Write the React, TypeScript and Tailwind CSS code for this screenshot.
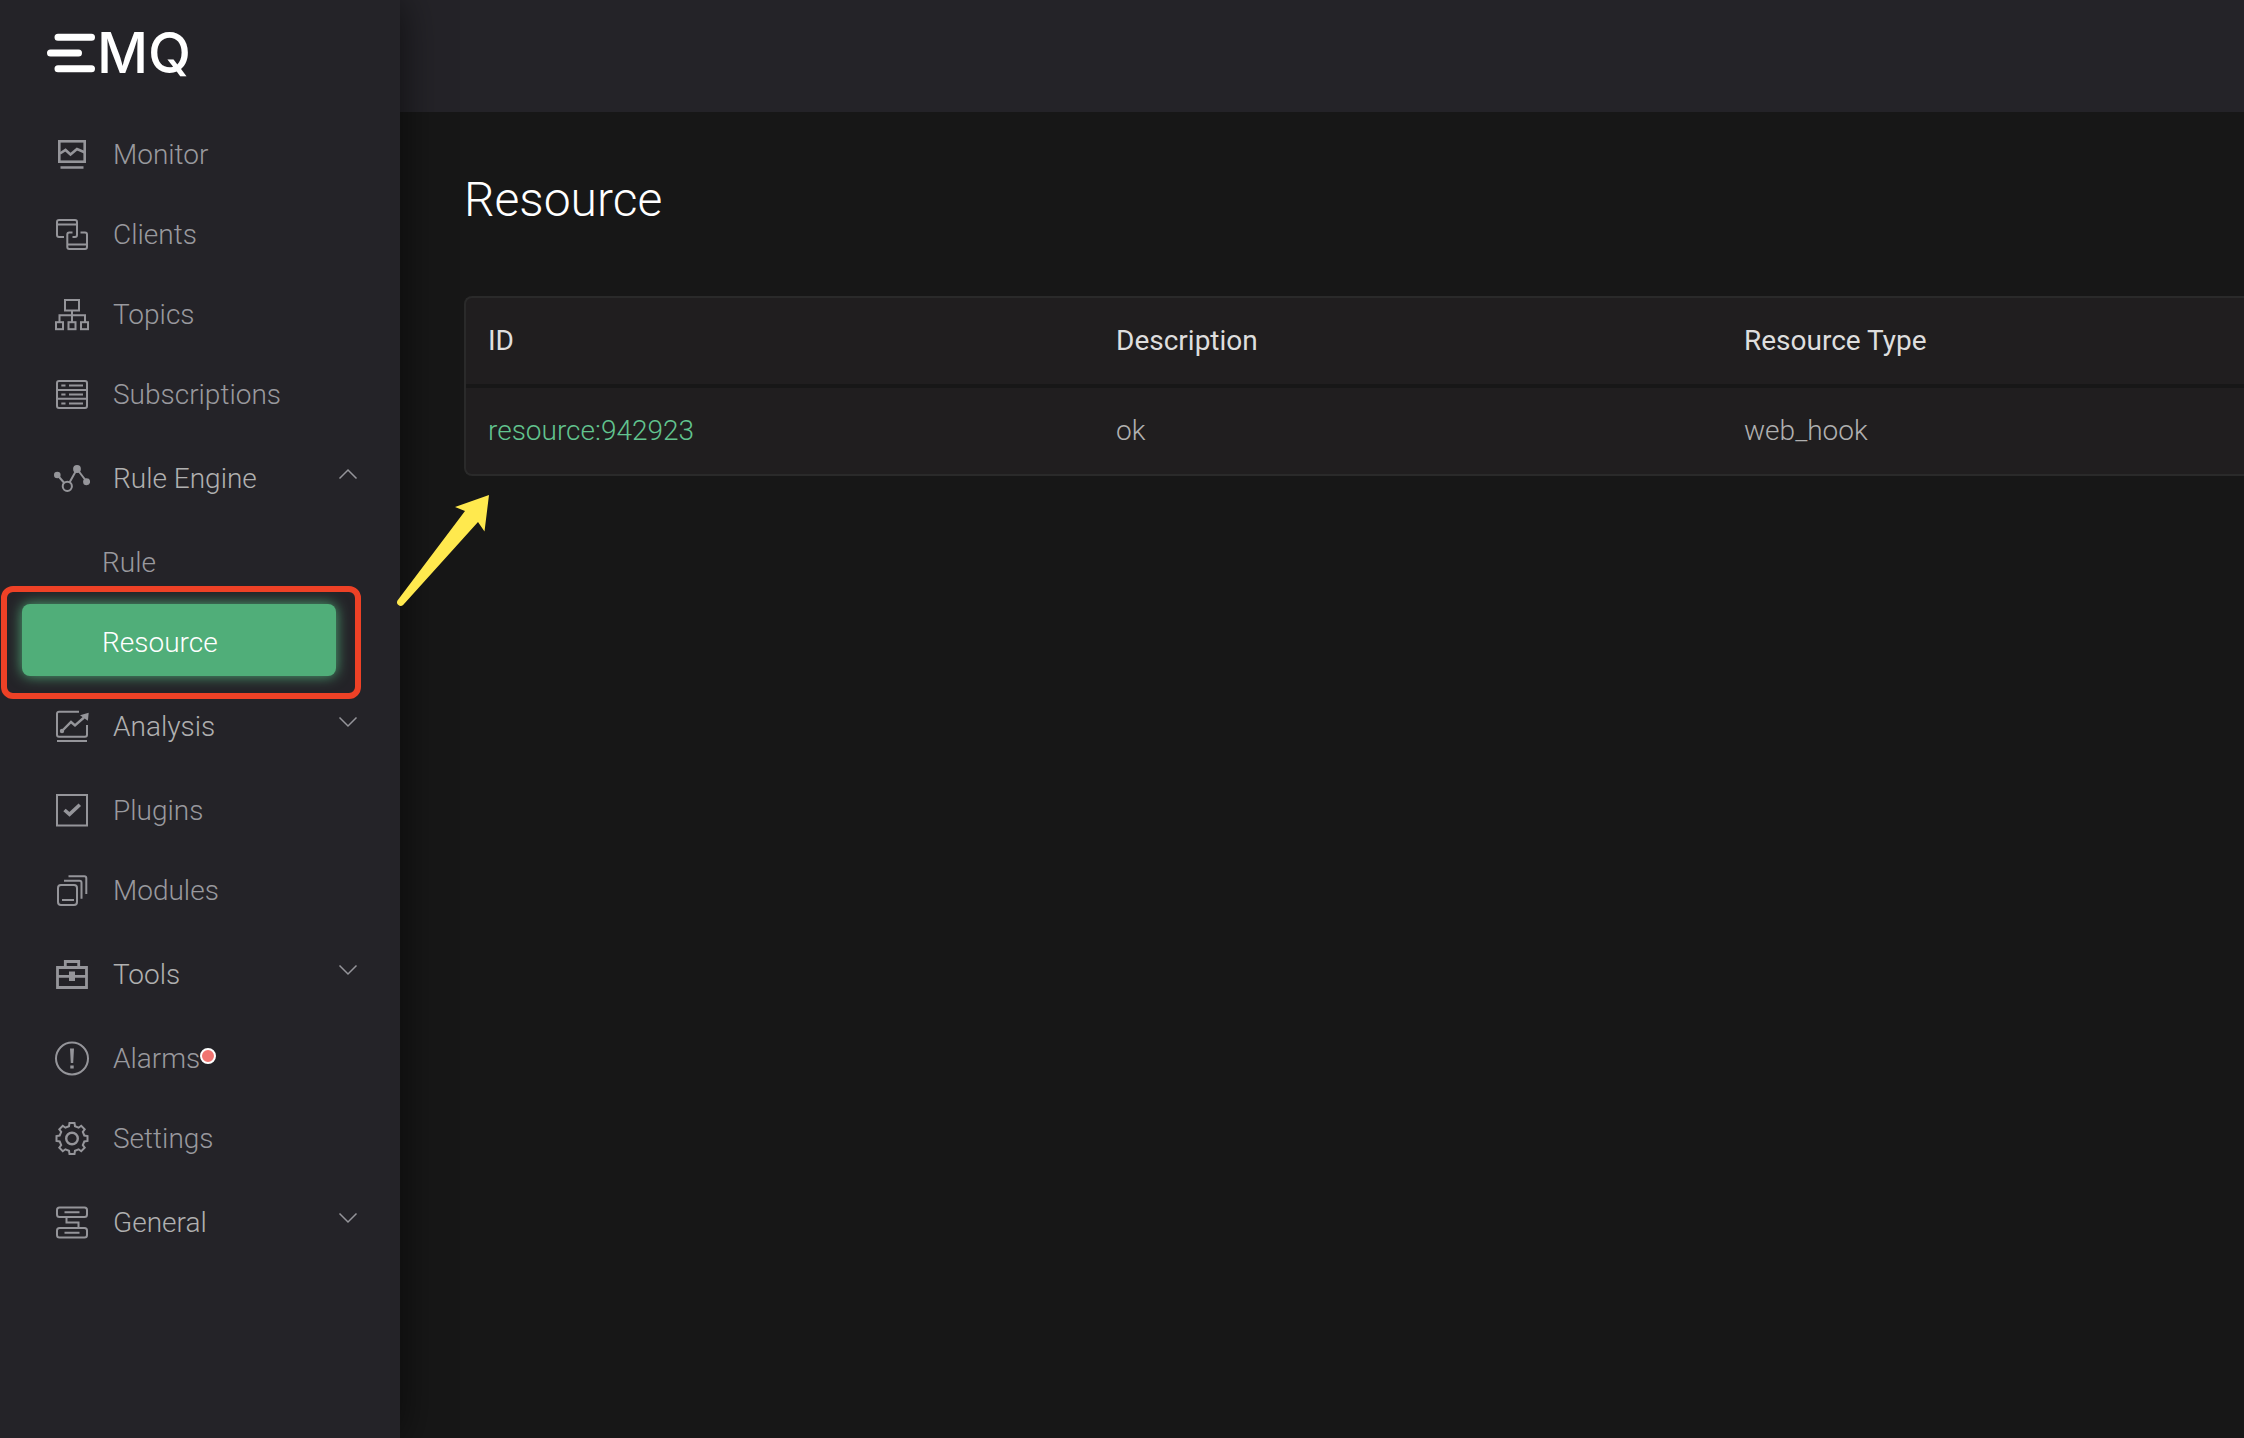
import React from "react";
import clsx from "clsx";

type IconName =
  | "monitor"
  | "clients"
  | "topics"
  | "subscriptions"
  | "ruleEngine"
  | "analysis"
  | "plugins"
  | "modules"
  | "tools"
  | "alarms"
  | "settings"
  | "general";

type MenuItem = {
  label: string;
  icon: IconName;
  dot?: boolean;
  open?: boolean;
  submenu?: { label: string; active?: boolean }[];
};

const menu: MenuItem[] = [
  { label: "Monitor", icon: "monitor" },
  { label: "Clients", icon: "clients" },
  { label: "Topics", icon: "topics" },
  { label: "Subscriptions", icon: "subscriptions" },
  {
    label: "Rule Engine",
    icon: "ruleEngine",
    open: true,
    submenu: [{ label: "Rule" }, { label: "Resource", active: true }],
  },
  { label: "Analysis", icon: "analysis", submenu: [] },
  { label: "Plugins", icon: "plugins" },
  { label: "Modules", icon: "modules" },
  { label: "Tools", icon: "tools", submenu: [] },
  { label: "Alarms", icon: "alarms", dot: true },
  { label: "Settings", icon: "settings" },
  { label: "General", icon: "general", submenu: [] },
];

const resources = [
  { id: "resource:942923", description: "ok", type: "web_hook" },
];

const iconShapes: Record<IconName, React.ReactNode> = {
  monitor: (
    <g strokeWidth="2.6">
      <rect x="5.3" y="5.3" width="25.4" height="20.4" />
      <path d="M6 17.5l5.5-3.5 5 4.5 6.5-5.5 8 3.5M6.5 31.5h23" />
    </g>
  ),
  clients: (
    <path d="M10 21H5a2 2 0 0 1-2-2V6a2 2 0 0 1 2-2h16a2 2 0 0 1 2 2v13a2 2 0 0 1-2 2h-2.5M3 8.5h20M18.5 16.5h-3.2a2 2 0 0 0-2 2V31a2 2 0 0 0 2 2H31a2 2 0 0 0 2-2V18.5a2 2 0 0 0-2-2h-4.5M13.3 28.5H33" />
  ),
  topics: (
    <>
      <rect x="11" y="4" width="14" height="10.5" />
      <path d="M18 14.5V26M5.5 26v-6.7h25.5V26" />
      <rect x="2" y="26.2" width="7" height="7" />
      <rect x="14.5" y="26.2" width="7" height="7" />
      <rect x="27" y="26.2" width="7" height="7" />
    </>
  ),
  subscriptions: (
    <>
      <rect x="3" y="5" width="30" height="27" rx="2" />
      <path d="M3 14h30M3 22.8h30M7.3 9.5h4.2M15 9.5h14M7.3 18.4h4.2M15 18.4h14M7.3 27.4h4.2M15 27.4h14" />
    </>
  ),
  ruleEngine: (
    <>
      <path d="M3.3 15l7 8M15.5 22.5L23 9l9.5 12.5" />
      <circle cx="13.3" cy="26.3" r="4.6" />
      <g fill="currentColor" stroke="none">
        <circle cx="3.3" cy="15" r="3.3" />
        <circle cx="23" cy="9" r="3.9" />
        <circle cx="32.6" cy="21.7" r="3.5" />
      </g>
    </>
  ),
  analysis: (
    <>
      <path d="M25 3.7H5a2 2 0 0 0-2 2v21a2 2 0 0 0 2 2h26a2 2 0 0 0 2-2V17M3 33h30" />
      <path d="M8 23l9-9 4 3.5 9-8" strokeWidth="2.4" />
      <circle cx="8" cy="23" r="2.2" fill="currentColor" stroke="none" />
      <path d="M26 7.2l8.7-2.5-.8 8z" fill="currentColor" stroke="none" />
    </>
  ),
  plugins: (
    <>
      <rect x="3" y="3" width="30" height="30.5" />
      <path d="M10.5 18l5 4.3 10.3-9.6" strokeWidth="3.6" />
    </>
  ),
  modules: (
    <path d="M7 13h13a3 3 0 0 1 3 3v14a3 3 0 0 1-3 3H7a3 3 0 0 1-3-3V16a3 3 0 0 1 3-3zM8 28h12M10 8.7h15.5a2 2 0 0 1 2 2v16M14.5 4.3h15.8a2 2 0 0 1 2 2V22" />
  ),
  tools: (
    <>
      <path
        d="M3.5 11.5h29v20h-29zM11.3 11V5.5h13.4V11M3.5 20.3h29"
        strokeWidth="2.8"
      />
      <path d="M15 15.5h6V25h-6z" fill="currentColor" stroke="none" />
    </>
  ),
  alarms: (
    <>
      <circle cx="18" cy="18.5" r="16" />
      <path
        d="M16 8.5h4l-.8 14.5h-2.4zM16.3 25.5h3.4v3h-3.4z"
        fill="currentColor"
        stroke="none"
      />
    </>
  ),
  settings: (
    <g transform="translate(18 18.5)">
      <path d="M-2.5-15.5h5l.5 3.2 3.6 1.5 2.6-1.9 3.5 3.5-1.9 2.6L12.3-3l3.2.5v5l-3.2.5-1.5 3.6 1.9 2.6-3.5 3.5-2.6-1.9L3 12.3l-.5 3.2h-5l-.5-3.2-3.6-1.5-2.6 1.9-3.5-3.5 1.9-2.6L-12.3 3l-3.2-.5v-5l3.2-.5 1.5-3.6-1.9-2.6 3.5-3.5 2.6 1.9 3.6-1.5z" />
      <circle r="5.8" strokeWidth="2.4" />
    </g>
  ),
  general: (
    <>
      <rect x="3" y="3.5" width="30" height="9.5" rx="2.5" />
      <rect x="3" y="24" width="30" height="9.5" rx="2.5" />
      <path d="M10.5 8.3h15M10.5 28.7h15M12.5 13v5.5h12V24" />
    </>
  ),
};

const MenuIcon: React.FC<{ name: IconName }> = ({ name }) => (
  <svg
    viewBox="0 0 36 36"
    fill="none"
    stroke="currentColor"
    strokeWidth="2"
    aria-hidden="true"
    className="size-9 shrink-0 text-[#95959a]"
  >
    {iconShapes[name]}
  </svg>
);

const Chevron: React.FC<{ open?: boolean }> = ({ open }) => (
  <svg
    viewBox="0 0 20 12"
    fill="none"
    stroke="currentColor"
    strokeWidth="1.5"
    aria-hidden="true"
    className="mb-2 ml-auto h-3 w-5 text-[#95959a]"
  >
    <path d={open ? "M1.5 10.5L10 2l8.5 8.5" : "M1.5 1.5L10 10l8.5-8.5"} />
  </svg>
);

const Logo: React.FC = () => (
  <a
    href="#"
    aria-label="EMQ"
    className="flex h-[114px] items-start pl-[46px] pt-[19px] text-white"
  >
    <svg
      viewBox="0 0 50 42"
      stroke="currentColor"
      strokeWidth="7"
      strokeLinecap="round"
      aria-hidden="true"
      className="mt-[13px] h-[42px] w-[50px] shrink-0"
    >
      <path d="M12 5.3h33.5M4.5 21h28M12 36.7h33.5" />
    </svg>
    <span className="pl-px font-[Inter,sans-serif] text-[56px] font-medium leading-[68px]">
      MQ
    </span>
  </a>
);

const Sidebar: React.FC = () => (
  <aside className="relative z-10 w-[400px] shrink-0 bg-[#242328] shadow-[0_0_40px_rgba(0,0,0,0.6)]">
    <Logo />
    <nav>
      <ul>
        {menu.map((item) => (
          <li key={item.label}>
            {item.submenu ? (
              <button
                type="button"
                aria-expanded={!!item.open}
                className="flex h-[88px] w-full cursor-pointer items-center gap-[23px] pl-[54px] pr-[42px] text-[#b0b0b0]"
              >
                <MenuIcon name={item.icon} />
                <span className="pt-0.5">{item.label}</span>
                <Chevron open={item.open} />
              </button>
            ) : (
              <a
                href="#"
                className="flex h-20 items-center gap-[23px] pl-[54px] text-[#99999e]"
              >
                <MenuIcon name={item.icon} />
                <span className="flex items-center pt-0.5">
                  {item.label}
                  {item.dot && (
                    <span className="mb-1.5 size-4 rounded-full border-2 border-white bg-[#f17471]" />
                  )}
                </span>
              </a>
            )}
            {item.open && (
              <ul>
                {item.submenu?.map((sub) => (
                  <li key={sub.label} className="relative h-20 pt-0.5">
                    <a
                      href="#"
                      aria-current={sub.active ? "page" : undefined}
                      className={clsx(
                        "ml-[22px] mr-16 flex h-[72px] items-center rounded-lg pl-20 pt-1.5",
                        sub.active
                          ? "bg-[#50ae79] text-white shadow-[0_0_14px_#50ae79]"
                          : "text-[#99999e]"
                      )}
                    >
                      {sub.label}
                    </a>
                    {sub.active && (
                      <div className="pointer-events-none absolute -bottom-[17px] -top-4 left-px right-[39px] rounded-xl border-6 border-[#ee4126]" />
                    )}
                  </li>
                ))}
              </ul>
            )}
          </li>
        ))}
      </ul>
    </nav>
  </aside>
);

const ResourceTable: React.FC = () => (
  <div className="overflow-hidden rounded-l-lg border-2 border-r-0 border-[#2a2a2a] bg-[#201e1f]">
    <table className="w-full table-fixed text-left">
      <thead>
        <tr className="h-[88px] border-b-4 border-[#171717] text-[#dedede]">
          <th className="w-[628px] px-[22px] font-normal">ID</th>
          <th className="w-[628px] px-[22px] font-normal">Description</th>
          <th className="px-[22px] font-normal">Resource Type</th>
        </tr>
      </thead>
      <tbody>
        {resources.map((row) => (
          <tr key={row.id} className="h-[88px] text-[#b0b0b0]">
            <td className="px-[22px]">
              <a href="#" className="text-[#62c48f]">
                {row.id}
              </a>
            </td>
            <td className="px-[22px]">{row.description}</td>
            <td className="px-[22px]">{row.type}</td>
          </tr>
        ))}
      </tbody>
    </table>
  </div>
);

const App: React.FC = () => {
  return (
    <div className="relative flex min-h-screen overflow-hidden bg-[#171717] font-[Roboto,sans-serif] text-[28px] font-light leading-10">
      <Sidebar />
      <div className="min-w-0 flex-1">
        <header className="h-28 bg-[#242328]" />
        <main className="pl-16 pt-[60px]">
          <h1 className="mb-[68px] text-5xl leading-[56px] text-white">
            Resource
          </h1>
          <ResourceTable />
        </main>
      </div>
      <svg
        viewBox="0 0 96 114"
        fill="#ffe94e"
        aria-hidden="true"
        className="pointer-events-none absolute left-[395px] top-[494px] z-20 h-[114px] w-24"
      >
        <path d="M94 1L60 13l10 4L2.5 106.5a3.7 3.7 0 0 0 5.6 4.6L83 28l6.5 9.5z" />
      </svg>
    </div>
  );
};

export default App;
